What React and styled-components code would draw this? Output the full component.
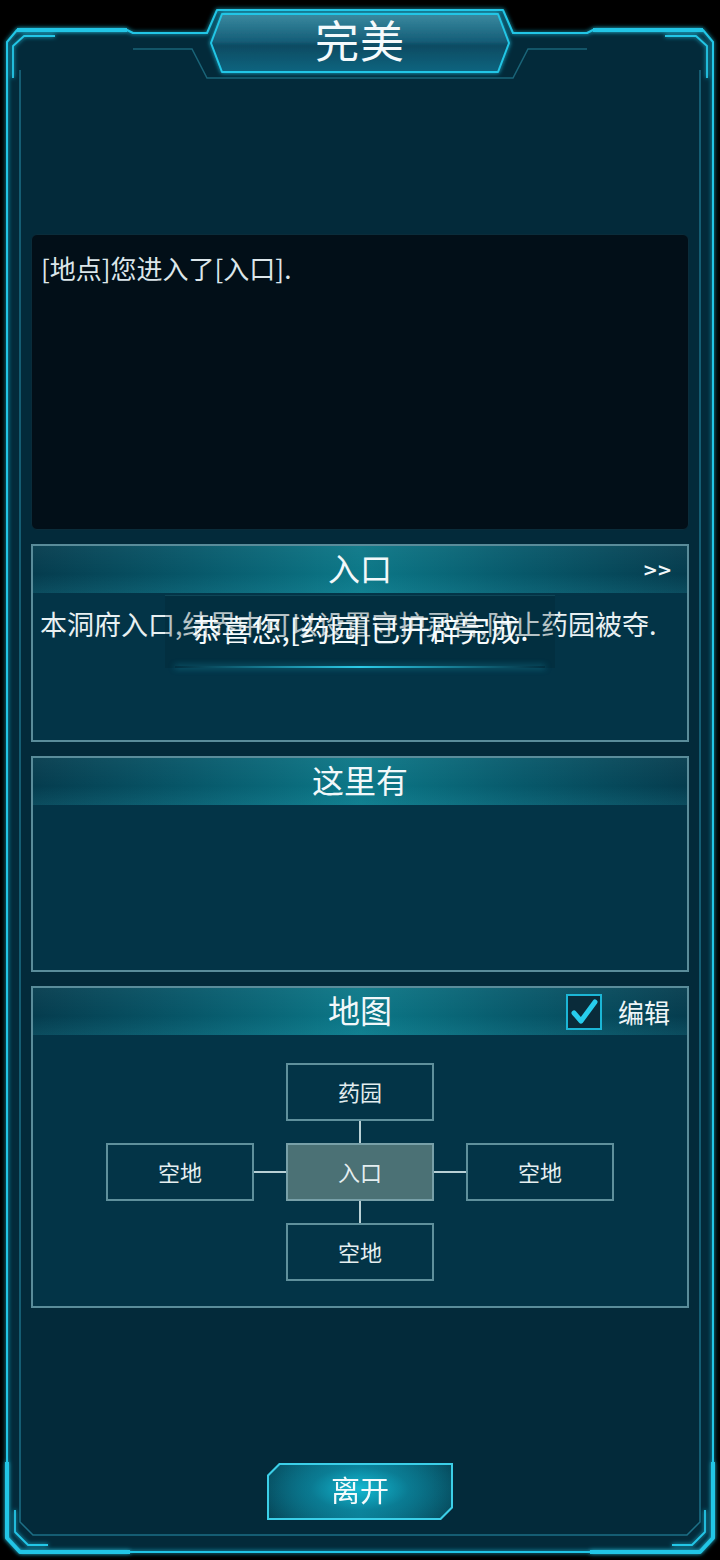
import React from "react";
import styled, { createGlobalStyle } from "styled-components";

const GlobalStyle = createGlobalStyle`
  html, body { margin: 0; padding: 0; background: #000; }
  body { font-family: "Noto Sans CJK SC", "Noto Sans", sans-serif; }
`;

const Screen = styled.div`
  position: relative;
  width: 720px;
  height: 1560px;
  overflow: hidden;
  background: #000;
  color: #e6eff2;
  font-family: "Noto Sans CJK SC", "Noto Sans", sans-serif;
`;

const FrameArt = styled.svg`
  position: absolute;
  inset: 0;
  width: 720px;
  height: 1560px;
  pointer-events: none;
`;

const Content = styled.div`
  position: relative;
  z-index: 1;
  display: flex;
  flex-direction: column;
  padding: 0 31px;
`;

const TitleBar = styled.header`
  height: 84px;
  box-sizing: border-box;
  padding-bottom: 6px;
  display: flex;
  align-items: center;
  justify-content: center;
  font-size: 44px;
  line-height: 1;
  color: #f4fafc;
  letter-spacing: 1px;
`;

const LogBox = styled.div`
  margin-top: 150px;
  height: 296px;
  box-sizing: border-box;
  padding: 15px 9px;
  background: #020f18;
  border: 1px solid #0a2c3a;
  border-radius: 6px;
  font-size: 26px;
  line-height: 36px;
  color: #dce6ea;
`;

const Section = styled.section`
  position: relative;
  margin-top: 14px;
  height: ${(p) => p.$h}px;
  box-sizing: border-box;
  border: 2px solid #5a8c9a;
  background: #033447;
  display: flex;
  flex-direction: column;
`;

const SectionHead = styled.div`
  position: relative;
  height: 47px;
  flex-shrink: 0;
  box-sizing: border-box;
  padding-bottom: 6px;
  display: flex;
  align-items: center;
  justify-content: center;
  background:
    linear-gradient(180deg, rgba(255, 255, 255, 0.04) 0%, rgba(0, 0, 0, 0) 60%, rgba(60, 190, 210, 0.12) 100%),
    linear-gradient(90deg, #053c4e 0%, #07586a 25%, #0c7888 50%, #07586a 75%, #053c4e 100%);
  font-size: 32px;
  line-height: 1;
  color: #f2f8fa;
`;

const More = styled.span`
  position: absolute;
  right: 16px;
  top: 50%;
  transform: translateY(-50%);
  font-family: "DejaVu Sans", sans-serif;
  font-size: 18px;
  font-weight: bold;
  letter-spacing: -1px;
  color: #f2f8fa;
`;

const BodyText = styled.p`
  margin: 0;
  padding: 13px 7px;
  font-size: 27px;
  line-height: 36px;
  color: #e8f0f2;
  white-space: nowrap;
`;

const Toast = styled.div`
  position: absolute;
  left: 132px;
  top: 49px;
  width: 390px;
  height: 73px;
  box-sizing: border-box;
  padding-bottom: 8px;
  display: flex;
  align-items: center;
  justify-content: center;
  background: rgba(2, 30, 42, 0.22);
  border-top: 1px solid rgba(80, 170, 190, 0.18);
  font-size: 30px;
  color: #f6fbfc;
  white-space: nowrap;

  &::after {
    content: "";
    position: absolute;
    left: 10px;
    right: 10px;
    bottom: 0;
    height: 2px;
    background: linear-gradient(90deg, rgba(40, 200, 230, 0), #2ccbe8 50%, rgba(40, 200, 230, 0));
    box-shadow: 0 0 6px rgba(40, 200, 230, 0.6);
  }
`;

const EditToggle = styled.label`
  position: absolute;
  right: 17px;
  top: 50%;
  transform: translateY(-50%);
  display: flex;
  align-items: center;
  gap: 16px;
  font-size: 26px;
  line-height: 1;
  color: #eef5f7;
`;

const CheckBox = styled.span`
  width: 36px;
  height: 36px;
  box-sizing: border-box;
  border: 2px solid #1cb6d6;
  background: #0a2b3a;
  display: flex;
  align-items: center;
  justify-content: center;
`;

const MapGrid = styled.div`
  margin-top: 28px;
  display: grid;
  grid-template-columns: repeat(3, 148px);
  grid-template-rows: repeat(3, 58px);
  column-gap: 32px;
  row-gap: 22px;
  justify-content: center;
`;

const linkCss = {
  down: "left: calc(50% - 1px); top: calc(100% + 2px); width: 2px; height: 22px;",
  up: "left: calc(50% - 1px); bottom: calc(100% + 2px); width: 2px; height: 22px;",
  right: "top: calc(50% - 1px); left: calc(100% + 2px); width: 32px; height: 2px;",
  left: "top: calc(50% - 1px); right: calc(100% + 2px); width: 32px; height: 2px;",
};

const Node = styled.div`
  position: relative;
  grid-column: ${(p) => p.$col};
  grid-row: ${(p) => p.$row};
  box-sizing: border-box;
  padding-bottom: 3px;
  border: 2px solid ${(p) => (p.$active ? "#78a0a8" : "#5f909c")};
  background: ${(p) => (p.$active ? "#4b7175" : "transparent")};
  display: flex;
  align-items: center;
  justify-content: center;
  font-size: 22px;
  color: #e4eef0;

  &::after {
    content: "";
    position: absolute;
    background: #b9d0d5;
    ${(p) => (p.$link ? linkCss[p.$link] : "display: none;")}
  }
`;

const Footer = styled.div`
  margin-top: 155px;
  display: flex;
  justify-content: center;
`;

const LeaveButton = styled.button`
  width: 186px;
  height: 57px;
  padding: 2px;
  border: none;
  background: #3ccfe8;
  clip-path: polygon(12px 0, 100% 0, 100% calc(100% - 12px), calc(100% - 12px) 100%, 0 100%, 0 12px);
  filter: drop-shadow(0 0 4px rgba(40, 200, 230, 0.5));
  cursor: pointer;
`;

const LeaveInner = styled.span`
  display: flex;
  width: 100%;
  height: 100%;
  box-sizing: border-box;
  padding-bottom: 4px;
  align-items: center;
  justify-content: center;
  clip-path: polygon(11px 0, 100% 0, 100% calc(100% - 11px), calc(100% - 11px) 100%, 0 100%, 0 11px);
  background:
    radial-gradient(ellipse 60% 90% at 50% 45%, rgba(20, 190, 215, 0.9) 0%, rgba(12, 140, 165, 0.6) 45%, rgba(6, 70, 90, 0) 100%),
    linear-gradient(90deg, #06485a 0%, #0a7890 50%, #06485a 100%);
  font-family: "Noto Sans CJK SC", sans-serif;
  font-size: 29px;
  line-height: 1;
  color: #f4fbfc;
`;

const m = (x) => 720 - x;

function Frame() {
  const outer = `M7,42 L17,30 L127,30 L133,33 L207,33 L217,10 L${m(217)},10 L${m(207)},33 L${m(133)},33 L${m(127)},30 L${m(17)},30 L713,42 L713,1538 L700,1552 L20,1552 L7,1538 Z`;
  const tab = `M211,43 L222,14 L${m(222)},14 L${m(211)},43 L${m(222)},72 L222,72 Z`;
  const innerTop = `M133,49 L192,49 L207,78 L${m(207)},78 L${m(192)},49 L${m(133)},49`;
  const innerSides = `M20,70 L20,1522 L33,1535 L${m(33)},1535 L700,1522 L700,70`;
  return (
    <FrameArt viewBox="0 0 720 1560">
      <defs>
        <filter id="glow" x="-5%" y="-5%" width="110%" height="110%">
          <feGaussianBlur stdDeviation="2.2" result="b" />
          <feMerge>
            <feMergeNode in="b" />
            <feMergeNode in="SourceGraphic" />
          </feMerge>
        </filter>
        <linearGradient id="tabFill" x1="0" y1="0" x2="0" y2="1">
          <stop offset="0" stopColor="#3a8aa0" />
          <stop offset="0.45" stopColor="#17607a" />
          <stop offset="0.55" stopColor="#0b4b62" />
          <stop offset="1" stopColor="#0e6580" />
        </linearGradient>
      </defs>
      <path d={outer} fill="#032a3a" />
      <path d={innerTop} fill="none" stroke="#1a6478" strokeWidth="1.5" />
      <path d={innerSides} fill="none" stroke="#1d6f86" strokeWidth="1.5" />
      <g filter="url(#glow)" fill="none" stroke="#22c6e6" strokeLinejoin="round">
        <path d={outer} strokeWidth="2" />
        <path d={tab} fill="url(#tabFill)" strokeWidth="2" />
        <path d={`M17,30 L127,30 M${m(17)},30 L${m(127)},30`} strokeWidth="4" />
        <path d={`M13,78 L13,46 L24,36 L55,36 M${m(13)},78 L${m(13)},46 L${m(24)},36 L${m(55)},36`} strokeWidth="1.8" />
        <path d={`M7,1462 L7,1538 L20,1552 L130,1552 M713,1462 L713,1538 L700,1552 L590,1552`} strokeWidth="4" />
        <path d={`M15,1510 L15,1532 L28,1545 L48,1545 M${m(15)},1510 L${m(15)},1532 L${m(28)},1545 L${m(48)},1545`} strokeWidth="1.8" />
      </g>
    </FrameArt>
  );
}

function CheckMark() {
  return (
    <svg width="28" height="28" viewBox="0 0 28 28">
      <path d="M4 15 L11 23 L25 4" fill="none" stroke="#27cdee" strokeWidth="5" strokeLinecap="round" strokeLinejoin="round" />
    </svg>
  );
}

const nodes = [
  { name: "药园", col: 2, row: 1, link: "down" },
  { name: "空地", col: 1, row: 2, link: "right" },
  { name: "入口", col: 2, row: 2, active: true },
  { name: "空地", col: 3, row: 2, link: "left" },
  { name: "空地", col: 2, row: 3, link: "up" },
];

export default function App() {
  return (
    <Screen>
      <GlobalStyle />
      <Frame />
      <Content>
        <TitleBar>完美</TitleBar>

        <LogBox>[地点]您进入了[入口].</LogBox>

        <Section $h={198}>
          <SectionHead>
            入口
            <More>&gt;&gt;</More>
          </SectionHead>
          <BodyText>本洞府入口,结界中可以设置守护灵兽,防止药园被夺.</BodyText>
          <Toast>恭喜您,[药园]已开辟完成.</Toast>
        </Section>

        <Section $h={216}>
          <SectionHead>这里有</SectionHead>
        </Section>

        <Section $h={322}>
          <SectionHead>
            地图
            <EditToggle>
              <CheckBox>
                <CheckMark />
              </CheckBox>
              编辑
            </EditToggle>
          </SectionHead>
          <MapGrid>
            {nodes.map((n, i) => (
              <Node key={i} $col={n.col} $row={n.row} $link={n.link} $active={n.active}>
                {n.name}
              </Node>
            ))}
          </MapGrid>
        </Section>

        <Footer>
          <LeaveButton>
            <LeaveInner>离开</LeaveInner>
          </LeaveButton>
        </Footer>
      </Content>
    </Screen>
  );
}
